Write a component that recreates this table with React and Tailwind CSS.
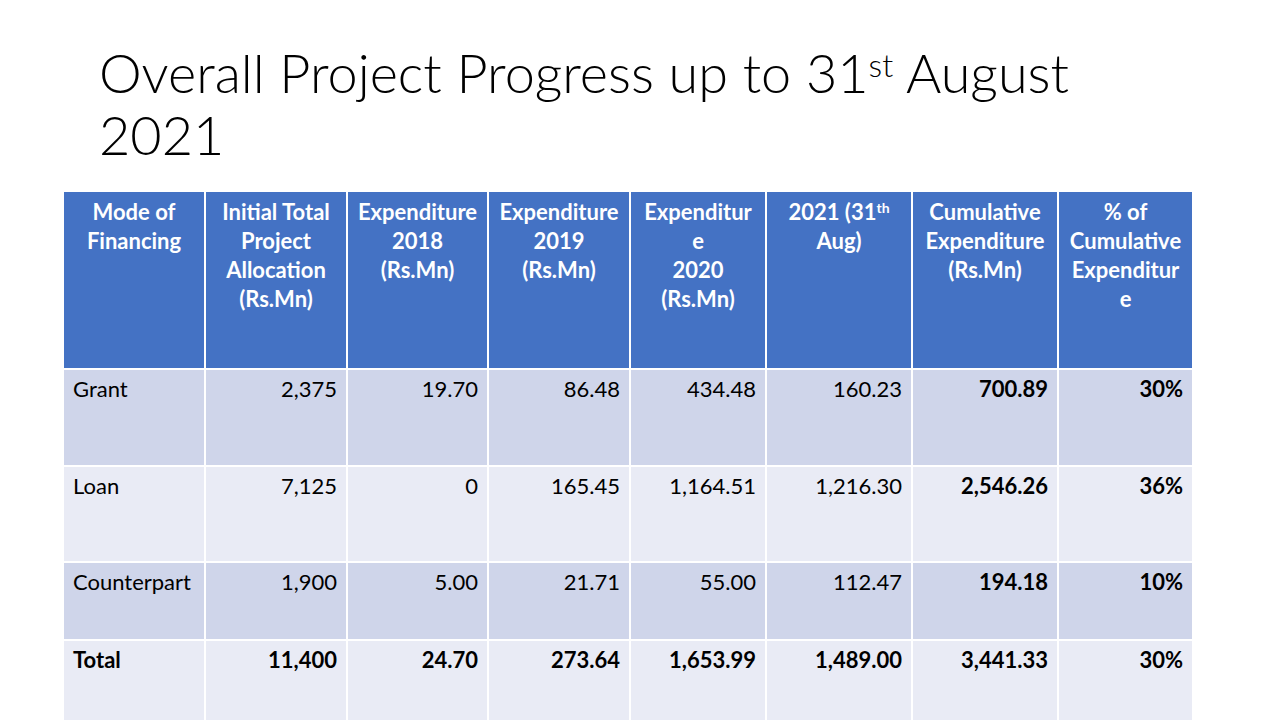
import React from 'react';

const HEADERS = [
  ['Mode of', 'Financing'],
  ['Initial Total', 'Project', 'Allocation', '(Rs.Mn)'],
  ['Expenditure', '2018', '(Rs.Mn)'],
  ['Expenditure', '2019', '(Rs.Mn)'],
  ['Expenditur', 'e', '2020', '(Rs.Mn)'],
  ['2021 (31TH', 'Aug)'],
  ['Cumulative', 'Expenditure', '(Rs.Mn)'],
  ['% of', 'Cumulative', 'Expenditur', 'e'],
];

const ROWS = [
  { name: 'Grant', vals: ['2,375', '19.70', '86.48', '434.48', '160.23', '700.89', '30%'], bg: 'bg-[#cfd5ea]', h: 'h-[95px]' },
  { name: 'Loan', vals: ['7,125', '0', '165.45', '1,164.51', '1,216.30', '2,546.26', '36%'], bg: 'bg-[#e9ebf5]', h: 'h-[94px]' },
  { name: 'Counterpart', vals: ['1,900', '5.00', '21.71', '55.00', '112.47', '194.18', '10%'], bg: 'bg-[#cfd5ea]', h: 'h-[76px]' },
  { name: 'Total', vals: ['11,400', '24.70', '273.64', '1,653.99', '1,489.00', '3,441.33', '30%'], bg: 'bg-[#e9ebf5]', h: 'h-[90px]', total: true },
];

const HeaderLine = ({ text }) => {
  if (text === '2021 (31TH') {
    return <div>2021 (31<sup className="text-[14px]">th</sup></div>;
  }
  return <div>{text}</div>;
};

const App = () => {
  return (
    <div className="w-[1280px] h-[720px] bg-white overflow-hidden font-['Lato',sans-serif]">
      <div className="pl-[99px] pt-[42px] h-[192px]">
        <h1 className="text-[54px] leading-[62px] font-light text-black">
          Overall Project Progress up to 31<sup className="text-[32px]">st</sup> August<br />2021
        </h1>
      </div>

      {/* Table */}
      <div className="ml-[64px] w-[1128px] grid grid-cols-[140px_140px_139px_140px_134px_144px_144px_133px] gap-x-[2px] bg-white">
        {HEADERS.map((lines, i) => (
          <div key={i} className="bg-[#4472c4] h-[176px] pt-[5px] text-center text-white font-bold text-[22px] leading-[29px]">
            {lines.map((l, j) => <HeaderLine key={j} text={l} />)}
          </div>
        ))}
        {ROWS.map((row, r) => (
          <React.Fragment key={r}>
            <div className={`${row.bg} ${row.h} mt-[2px] pl-[9px] pt-[5px] text-[22px] leading-[28px] text-black ${row.total ? 'font-bold' : ''}`}>
              {row.name}
            </div>
            {row.vals.map((v, c) => (
              <div key={c} className={`${row.bg} ${row.h} mt-[2px] pr-[9px] pt-[5px] text-right text-[22px] leading-[28px] text-black ${row.total || c >= 5 ? 'font-bold' : ''}`}>
                {v}
              </div>
            ))}
          </React.Fragment>
        ))}
      </div>
    </div>
  );
};

export default App;
